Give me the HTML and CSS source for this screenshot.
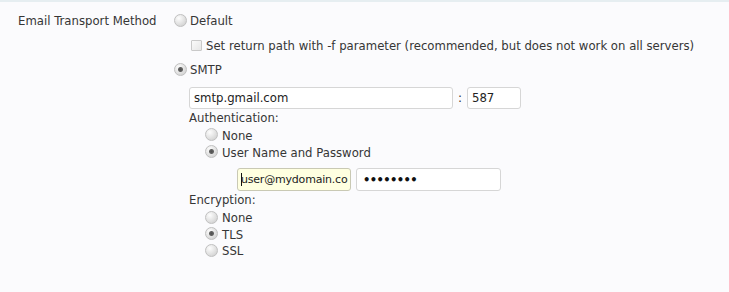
FILE: index.html
```html
<!DOCTYPE html>
<html>
<head>
<meta charset="utf-8">
<link rel="stylesheet" href="styles.css">
</head>
<body>
<div class="settings">
  <div class="field-row">
    <div class="field-label">Email Transport Method</div>
    <div class="field-body">
      <label class="opt"><input type="radio" name="transport" class="radio"><span>Default</span></label>
      <label class="opt opt-check"><input type="checkbox" class="check"><span>Set return path with -f parameter (recommended, but does not work on all servers)</span></label>
      <label class="opt"><input type="radio" name="transport" class="radio" checked><span>SMTP</span></label>
      <div class="smtp">
        <div class="host-line">
          <input type="text" class="text host" value="smtp.gmail.com">
          <span class="colon">:</span>
          <input type="text" class="text port" value="587">
        </div>
        <div class="sub-title">Authentication:</div>
        <div class="sub-opts">
          <label class="sub-opt"><input type="radio" name="auth" class="radio"><span>None</span></label>
          <label class="sub-opt"><input type="radio" name="auth" class="radio" checked><span>User Name and Password</span></label>
        </div>
        <div class="cred-line">
          <span class="focus-wrap"><input type="text" class="text user" value="user@mydomain.co"></span>
          <input type="password" class="text pass" value="password">
        </div>
        <div class="sub-title enc">Encryption:</div>
        <div class="sub-opts enc-opts">
          <label class="sub-opt"><input type="radio" name="enc" class="radio"><span>None</span></label>
          <label class="sub-opt"><input type="radio" name="enc" class="radio" checked><span>TLS</span></label>
          <label class="sub-opt"><input type="radio" name="enc" class="radio"><span>SSL</span></label>
        </div>
      </div>
    </div>
  </div>
</div>
</body>
</html>
```
FILE: styles.css
```css
html, body {
  margin: 0;
  padding: 0;
  background: #fbfbfd;
}
body {
  font-family: "DejaVu Sans", Verdana, sans-serif;
  font-size: 11.7px;
  color: #363636;
  height: 292px;
}
.settings {
  border-top: 2px solid #e6eef1;
  padding-top: 7px;
}
.field-row {
  display: grid;
  grid-template-columns: 174px 1fr;
}
.field-label {
  padding-left: 18px;
  height: 24px;
  line-height: 24px;
  white-space: nowrap;
}
.field-body {
  display: flex;
  flex-direction: column;
}
.opt {
  display: flex;
  align-items: center;
  height: 24px;
  white-space: nowrap;
}
.opt-check {
  height: 25px;
  padding-left: 17px;
}
.radio {
  appearance: none;
  -webkit-appearance: none;
  margin: 0 3px 0 0;
  width: 13px;
  height: 13px;
  border-radius: 50%;
  border: 1px solid #c0c0c0;
  background: radial-gradient(circle at 35% 30%, #fdfdfd 0%, #e6e6e6 45%, #c9c9c9 100%);
  box-sizing: border-box;
  flex: none;
  position: relative;
  top: -1px;
}
.radio:checked {
  background:
    radial-gradient(circle at 50% 50%, #505050 0, #626262 2px, rgba(110,110,110,0) 3px),
    radial-gradient(circle at 35% 30%, #fdfdfd 0%, #e6e6e6 45%, #c9c9c9 100%);
}
.check {
  appearance: none;
  -webkit-appearance: none;
  margin: 0 4px 0 0;
  width: 11px;
  height: 11px;
  border: 1px solid #c9c9c9;
  border-radius: 1px;
  background: linear-gradient(135deg, #fafafa 0%, #e6e6e6 100%);
  box-sizing: border-box;
  flex: none;
}
.smtp {
  padding-left: 15px;
  display: flex;
  flex-direction: column;
}
.host-line {
  display: flex;
  align-items: center;
  margin-top: 5px;
  height: 22px;
}
.text {
  font-family: "DejaVu Sans", Verdana, sans-serif;
  font-size: 11.7px;
  color: #222;
  box-sizing: border-box;
  height: 22px;
  border: 1px solid #d6d6d6;
  border-radius: 3px;
  background: #fff;
  padding: 0 4px;
  margin: 0;
  outline: none;
}
.host { width: 264px; }
.colon {
  width: 14px;
  text-align: center;
  font-size: 12px;
}
.port { width: 54px; }
.sub-title {
  margin-top: 1px;
  height: 17px;
  line-height: 17px;
}
.sub-opts {
  display: flex;
  flex-direction: column;
  padding-left: 16px;
}
.sub-opt {
  display: flex;
  align-items: center;
  height: 17px;
  white-space: nowrap;
}
.enc-opts .sub-opt { height: 16.5px; }
.sub-opt .radio { margin-right: 4px; }
.cred-line {
  display: flex;
  gap: 5px;
  margin-top: 7px;
  margin-left: 48px;
  height: 23px;
}
.cred-line .text { height: 23px; }
.focus-wrap {
  position: relative;
  display: block;
}
.focus-wrap::after {
  content: "";
  position: absolute;
  left: 4px;
  top: 5px;
  width: 1px;
  height: 13px;
  background: #111;
}
.user {
  width: 114px;
  background: #ffffe0;
  border-color: #c9c9b4;
  padding: 0 1px 0 3px;
  font-size: 11px;
  letter-spacing: -0.2px;
}
.pass {
  width: 145px;
  padding-left: 6px;
  font-size: 11.5px;
  font-weight: bold;
  letter-spacing: -0.6px;
  color: #111;
}
.enc { margin-top: 1px; margin-bottom: 1px; }
```
